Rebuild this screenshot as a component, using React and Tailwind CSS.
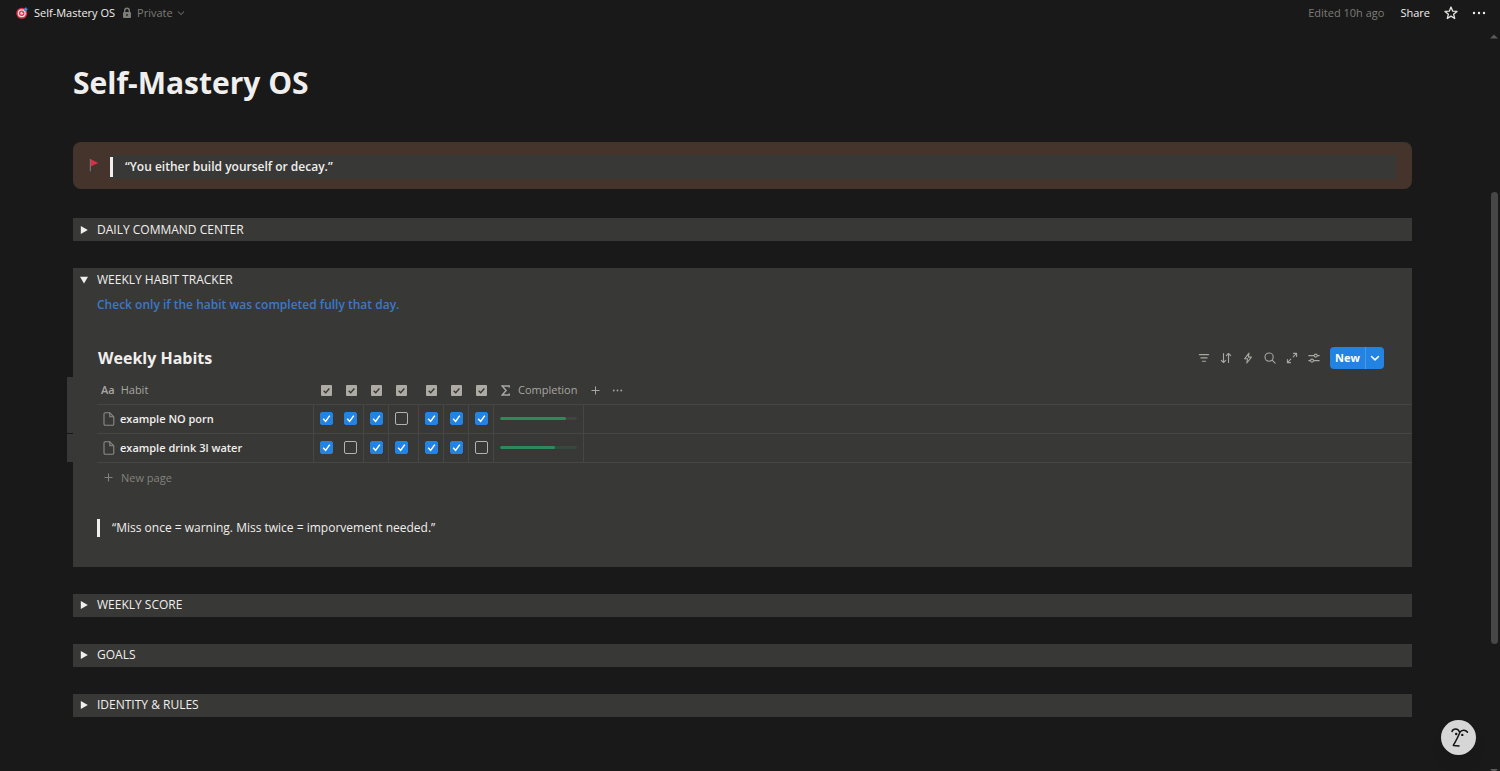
import React from "react";

const GREY = "border-[#464644]";

function TargetIcon() {
  return (
    <svg viewBox="0 0 24 24" className="size-3 shrink-0" aria-hidden="true">
      <circle cx="11.5" cy="12.5" r="11" fill="#dd2e44" />
      <circle cx="11.5" cy="12.5" r="8" fill="#f3dfe2" />
      <circle cx="11.5" cy="12.5" r="5.4" fill="#dd2e44" />
      <circle cx="11.5" cy="12.5" r="2.8" fill="#f3dfe2" />
      <path d="M11.5 12.5 19 5" stroke="#7a8a95" strokeWidth="1.6" />
      <path d="M16.5 7.5 16 4l4-4 1 3 3 1-4 4z" fill="#3b94d9" />
    </svg>
  );
}

function LockIcon() {
  return (
    <svg viewBox="0 0 12 12" className="size-3 shrink-0" aria-hidden="true">
      <path d="M3.7 5.5V3.6a2.3 2.3 0 0 1 4.6 0v1.9" fill="none" stroke="#7d7c78" strokeWidth="1.4" />
      <rect x="2" y="5" width="8" height="6" rx="1" fill="#7d7c78" />
      <rect x="5.4" y="6.8" width="1.2" height="2.4" rx=".6" fill="#191919" />
    </svg>
  );
}

function FlagIcon() {
  return (
    <svg viewBox="0 0 12 14" className="h-3.5 w-3" aria-hidden="true">
      <path d="M2.4 1v12.2" stroke="#66757f" strokeWidth="1.2" />
      <path d="M2.8 1.2 10.2 5 2.8 8.4z" fill="#dd2e44" />
    </svg>
  );
}

function Chevron({ className, width = 1.2 }) {
  return (
    <svg viewBox="0 0 8 8" className={className} fill="none" stroke="currentColor" strokeWidth={width} strokeLinecap="round" strokeLinejoin="round" aria-hidden="true">
      <path d="M1.200 2.800 4 5.500 6.800 2.800" />
    </svg>
  );
}

function Triangle({ open }) {
  return (
    <svg viewBox="0 0 8 8" className="size-2 shrink-0" fill="#f0efed" aria-hidden="true">
      <path d={open ? "M0 .8h8L4 7.6z" : "M.8 0v8L7.8 4z"} />
    </svg>
  );
}

function ToggleButton({ title, open = false }) {
  return (
    <button type="button" aria-expanded={open} className="flex h-[23px] w-full items-center gap-[9px] pl-[7px] text-left">
      <Triangle open={open} />
      {title}
    </button>
  );
}

function Toggle({ title }) {
  return (
    <section className="bg-[#383836]">
      <ToggleButton title={title} />
    </section>
  );
}

const tools = [
  { name: "Filter", body: <path d="M1.3 2.6h9.4M2.9 5.9h6.2M4.4 9.2h3.2" /> },
  { name: "Sort", body: <path d="M3.5 1.5v9M1.3 8.3l2.2 2.2 2.2-2.2M8.5 10.5v-9M6.3 3.7l2.2-2.2 2.2 2.2" /> },
  { name: "Automations", body: <path d="M7 1 2.6 6.8h2.9L4.8 11l4.6-5.9H6.4z" /> },
  { name: "Search", body: <path d="M9.2 5.1a4.1 4.1 0 1 1-8.2 0 4.1 4.1 0 0 1 8.2 0zM8.1 8.1l3 3" /> },
  { name: "Open as full page", body: <path d="M7.2 4.8 10.6 1.4M7.5 1.4h3.1v3.1M4.8 7.2l-3.4 3.4M1.4 7.5v3.1h3.1" /> },
  {
    name: "View settings",
    body: (
      <path d="M.8 3.6h5.4M9.2 3.6h2M9.2 3.6a1.5 1.5 0 1 1-3 0 1.5 1.5 0 0 1 3 0zM.8 8.6h1.7M5.5 8.6h5.7M5.5 8.6a1.5 1.5 0 1 1-3 0 1.5 1.5 0 0 1 3 0z" />
    ),
  },
];

const days = ["Monday", "Tuesday", "Wednesday", "Thursday", "Friday", "Saturday", "Sunday"];

const habits = [
  { name: "example NO porn", done: [true, true, true, false, true, true, true] },
  { name: "example drink 3l water", done: [true, false, true, true, true, true, false] },
];

function HeaderCheck() {
  return (
    <svg viewBox="0 0 11 11" className="size-[11px]" aria-hidden="true">
      <rect width="11" height="11" rx="1" fill="#aeaba5" />
      <path d="m2.7 5.7 2 2 3.7-4.2" fill="none" stroke="#383836" strokeWidth="1.4" />
    </svg>
  );
}

function DayCheckbox({ label, checked }) {
  return (
    <span className="grid size-[13px] place-items-center">
      <input
        type="checkbox"
        aria-label={label}
        defaultChecked={checked}
        className="peer col-start-1 row-start-1 size-[13px] appearance-none rounded-[2px] border border-[#b4b2ae] checked:border-[#2383e2] checked:bg-[#2383e2]"
      />
      <svg viewBox="0 0 13 13" className="pointer-events-none col-start-1 row-start-1 hidden size-[13px] peer-checked:block" fill="none" stroke="#fff" strokeWidth="1.5" aria-hidden="true">
        <path d="M3.2 6.8 5.6 9.4 9.8 3.6" />
      </svg>
    </span>
  );
}

function PageIcon() {
  return (
    <svg viewBox="0 0 12 14" className="h-3.5 w-3 shrink-0" fill="none" stroke="#8b8a86" strokeWidth="1.1" strokeLinejoin="round" aria-hidden="true">
      <path d="M2.2.8h4.6l4 4v7.2a1.2 1.2 0 0 1-1.2 1.2H2.2A1.2 1.2 0 0 1 1 12V2A1.2 1.2 0 0 1 2.2.8z" />
      <path d="M6.8.8v4h4" />
    </svg>
  );
}

function Plus() {
  return (
    <svg viewBox="0 0 9 9" className="size-[9px]" stroke="currentColor" strokeWidth="1" aria-hidden="true">
      <path d="M4.5.5v8M.5 4.5h8" />
    </svg>
  );
}

function Dots({ className }) {
  return (
    <svg viewBox="0 0 14 4" className={className} fill="currentColor" aria-hidden="true">
      <circle cx="2" cy="2" r="1.2" />
      <circle cx="7" cy="2" r="1.2" />
      <circle cx="12" cy="2" r="1.2" />
    </svg>
  );
}

function HabitTable() {
  return (
    <div className="relative ml-6">
      <div className="absolute top-0 -left-[30px] flex w-1.5 flex-col gap-px" aria-hidden="true">
        <div className="h-14 bg-[#383836]" />
        <div className="h-7 bg-[#383836]" />
      </div>
      <table className="w-full table-fixed border-collapse">
        <colgroup>
          <col className="w-[216px]" />
          <col className="w-[25px]" />
          <col className="w-[25px]" />
          <col className="w-[25px]" />
          <col className="w-[30px]" />
          <col className="w-[25px]" />
          <col className="w-[25px]" />
          <col className="w-[25px]" />
          <col className="w-[90px]" />
          <col />
        </colgroup>
        <thead className="text-[11px] text-[#a8a6a1]">
          <tr className={`h-[27px] border-b ${GREY}`}>
            <th scope="col" className="p-0 pl-1 text-left font-normal">
              <span className="flex items-center gap-1.5">
                <span className="font-semibold" aria-hidden="true">Aa</span>
                Habit
              </span>
            </th>
            {days.map((day) => (
              <th key={day} scope="col" aria-label={day} className="p-0 pl-2">
                <HeaderCheck />
              </th>
            ))}
            <th scope="col" className="p-0 pl-2 text-left font-normal">
              <span className="flex items-center gap-2">
                <svg viewBox="0 0 9 11" className="h-[11px] w-[9px]" fill="none" stroke="currentColor" strokeWidth="1.5" aria-hidden="true">
                  <path d="M8.2 2.4V1H1.2l3.9 4.5L1.2 10h7V8.6" />
                </svg>
                Completion
              </span>
            </th>
            <td className="p-0 pl-2">
              <span className="flex items-center gap-3">
                <button type="button" aria-label="Add property"><Plus /></button>
                <button type="button" aria-label="More options"><Dots className="h-[3px] w-[11px]" /></button>
              </span>
            </td>
          </tr>
        </thead>
        <tbody>
          {habits.map((habit) => {
            const count = habit.done.filter(Boolean).length;
            return (
              <tr key={habit.name} className={`h-[29px] border-b ${GREY}`}>
                <th scope="row" className={`border-r p-0 pl-1.5 text-left ${GREY}`}>
                  <a href="#habit" className="flex items-center gap-[5px] text-[11px] font-semibold">
                    <PageIcon />
                    <span>{habit.name}</span>
                  </a>
                </th>
                {habit.done.map((done, i) => (
                  <td key={days[i]} className={`p-0 pl-1.5 ${GREY} ${i === 0 ? "" : "border-r"}`}>
                    <DayCheckbox label={`${habit.name}, ${days[i]}`} checked={done} />
                  </td>
                ))}
                <td className={`border-r p-0 px-1.5 ${GREY}`}>
                  <div role="progressbar" aria-label="Completion" aria-valuemin="0" aria-valuemax="7" aria-valuenow={count} className="h-[3px] overflow-hidden rounded-full bg-[#37493f]">
                    <div className="h-full rounded-full bg-[#2f8a5b]" style={{ width: `${(count / 7) * 100}%` }} />
                  </div>
                </td>
                <td className="p-0" />
              </tr>
            );
          })}
        </tbody>
      </table>
      <button type="button" className="flex h-[30px] items-center gap-2 pl-[7px] text-[11px] text-[#83827e]">
        <Plus />
        New page
      </button>
    </div>
  );
}

function Scrollbar() {
  return (
    <div className="fixed top-8 right-0 bottom-0 flex w-3 flex-col items-center" aria-hidden="true">
      <svg viewBox="0 0 8 5" className="mt-0.5 h-[5px] w-2 shrink-0" fill="#5a5a5a"><path d="M4 .5 8 4.5H0z" /></svg>
      <div className="grow-[153]" />
      <div className="w-[7px] grow-[452] rounded-full bg-[#474747]" />
      <div className="grow-[125]" />
      <svg viewBox="0 0 8 2" className="h-0.5 w-2 shrink-0" fill="#5a5a5a"><path d="M0 0h8L6 2H2z" /></svg>
    </div>
  );
}

export default function App() {
  return (
    <div className="min-h-screen bg-[#191919] font-['Open_Sans','Noto_Sans',sans-serif] text-xs leading-5 text-[#f0efed]">
      <header className="flex h-[26px] items-center justify-between pr-3.5 pl-4 text-[11px]">
        <div className="flex items-center">
          <a href="#page" className="flex items-center gap-1.5">
            <TargetIcon />
            Self-Mastery OS
          </a>
          <button type="button" className="ml-1.5 flex items-center gap-1 text-[#7d7c78]">
            <LockIcon />
            Private
            <Chevron className="size-2" width={1} />
          </button>
        </div>
        <div className="flex items-center">
          <span className="text-[#7d7c78]">Edited 10h ago</span>
          <button type="button" className="ml-4">Share</button>
          <button type="button" aria-label="Favorite" className="ml-3.5">
            <svg viewBox="0 0 14 14" className="size-3.5" fill="none" stroke="#e6e5e3" strokeWidth="1.3" strokeLinejoin="round" aria-hidden="true">
              <path d="m7 1 1.6 4.1 4.4.3-3.4 2.8 1.1 4.3L7 10.1l-3.7 2.4 1.1-4.3L1 5.4l4.4-.3z" />
            </svg>
          </button>
          <button type="button" aria-label="More" className="ml-3.5"><Dots className="h-1 w-3.5" /></button>
        </div>
      </header>

      <main className="pt-[35px] pr-[88px] pb-12 pl-[73px]">
        <h1 className="text-[30px] leading-[44px] font-bold">Self-Mastery OS</h1>

        <aside className="mt-[37px] flex h-[47px] rounded-lg bg-[#45342b] pt-[13px] pr-4 pb-2.5 pl-[15px]">
          <div className="mt-[3px] w-[22px]"><FlagIcon /></div>
          <blockquote className="flex h-6 grow items-center bg-[#383836]">
            <p className="border-l-[3px] border-[#f0efed] pl-3 font-semibold">“You either build yourself or decay.”</p>
          </blockquote>
        </aside>

        <div className="mt-[29px] flex flex-col gap-[27px]">
          <Toggle title="DAILY COMMAND CENTER" />

          <section className="bg-[#383836] pb-[30px]">
            <ToggleButton title="WEEKLY HABIT TRACKER" open />
            <p className="mt-1 pl-6 font-semibold text-[#3b78c7]">Check only if the habit was completed fully that day.</p>

            <div className="mt-[31px] flex h-6 items-center justify-between pr-7 pl-[25px]">
              <h2 className="text-base leading-6 font-bold">Weekly Habits</h2>
              <div className="flex items-center gap-2.5">
                {tools.map((tool) => (
                  <button key={tool.name} type="button" aria-label={tool.name} className="text-[#a8a6a1]">
                    <svg viewBox="0 0 12 12" className="size-3" fill="none" stroke="currentColor" strokeWidth="1.1" strokeLinecap="round" strokeLinejoin="round" aria-hidden="true">
                      {tool.body}
                    </svg>
                  </button>
                ))}
                <div className="flex h-[22px] overflow-hidden rounded bg-[#2383e2] text-[11px] font-bold text-white">
                  <button type="button" className="w-9 border-r border-[#4a98e6]">New</button>
                  <button type="button" aria-label="New page options" className="grid w-[18px] place-items-center">
                    <Chevron className="size-2.5" />
                  </button>
                </div>
              </div>
            </div>

            <div className="mt-[7px]"><HabitTable /></div>

            <blockquote className="mt-[26px] ml-6 border-l-[3px] border-[#f0efed] pl-3 leading-[18px]">
              “Miss once = warning. Miss twice = imporvement needed.”
            </blockquote>
          </section>

          <Toggle title="WEEKLY SCORE" />
          <Toggle title="GOALS" />
          <Toggle title="IDENTITY &amp; RULES" />
        </div>
      </main>

      <Scrollbar />

      <button type="button" aria-label="Assistant" className="fixed right-6 bottom-4 size-[35px] rounded-full bg-[#d6d6d6] shadow-lg">
        <svg viewBox="0 0 35 35" className="size-full" fill="none" stroke="#141414" strokeWidth="1.5" strokeLinecap="round" strokeLinejoin="round" aria-hidden="true">
          <path d="M11 11.4c1.2-3.200 6-3.200 7.200.2M26.500 12.200c-1.800-2.600-6-2.600-7.700.2-1.600 4.200-4 8.600-6.500 13l5.700.6" />
          <circle cx="15.200" cy="14" r="1.200" fill="#141414" stroke="none" />
          <circle cx="21.300" cy="14.900" r="1.200" fill="#141414" stroke="none" />
        </svg>
      </button>
    </div>
  );
}
